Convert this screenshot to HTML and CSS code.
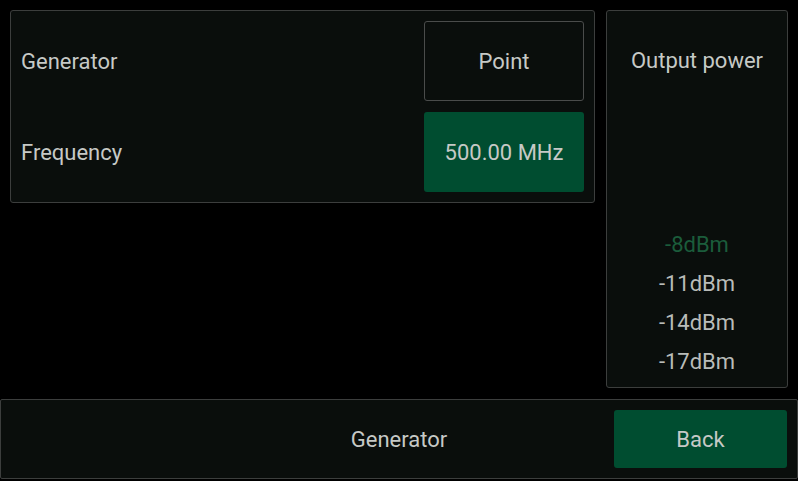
FILE: index.html
```html
<!DOCTYPE html>
<html lang="en">
<head>
  <meta charset="UTF-8" />
  <title>Generator</title>
  <link rel="stylesheet" href="styles.css">
</head>
<body>
  <div class="top">
    <div class="panel settings">
      <div class="row">
        <span class="label">Generator</span>
        <button class="btn outline">Point</button>
      </div>
      <div class="row">
        <span class="label">Frequency</span>
        <button class="btn green">500.00 MHz</button>
      </div>
    </div>
    <div class="panel power">
      <div class="power-title">Output power</div>
      <ul class="levels">
        <li class="active">-8dBm</li>
        <li>-11dBm</li>
        <li>-14dBm</li>
        <li>-17dBm</li>
      </ul>
    </div>
  </div>
  <div class="bottom">
    <div class="page-title">Generator</div>
    <button class="btn green back">Back</button>
  </div>
</body>
</html>
```

FILE: styles.css
```css
html, body {
  margin: 0;
  background: #000;
  height: 100%;
}
body {
  font-family: Roboto, "Liberation Sans", sans-serif;
  font-size: 22px;
  color: #c6c9c6;
  overflow: hidden;
}
.top {
  display: flex;
  gap: 11px;
  padding: 10px 10px 11px 10px;
  align-items: flex-start;
}
.panel {
  background: #0a0e0c;
  border: 1px solid #3c3e3d;
  border-radius: 3px;
  box-sizing: border-box;
}
.settings {
  width: 585px;
  padding: 10px;
  display: flex;
  flex-direction: column;
  gap: 11px;
}
.row {
  display: flex;
  align-items: center;
  justify-content: space-between;
  height: 80px;
}
.btn {
  font-family: inherit;
  font-size: 22px;
  color: #c6c9c6;
  width: 160px;
  height: 80px;
  border-radius: 3px;
  box-sizing: border-box;
  padding: 0;
}
.btn.outline {
  background: #0a0e0c;
  border: 1px solid #4a4c4b;
}
.btn.green {
  background: #004d30;
  border: none;
}
.power {
  width: 182px;
  height: 378px;
  display: flex;
  flex-direction: column;
  justify-content: space-between;
  align-items: center;
  padding: 10px 0 6px;
}
.power-title {
  height: 80px;
  line-height: 80px;
}
.levels {
  list-style: none;
  margin: 0;
  padding: 0;
  text-align: center;
}
.levels li {
  height: 39px;
  line-height: 39px;
  color: #b9bcb9;
}
.levels li.active {
  color: #1b5c3b;
}
.bottom {
  height: 80px;
  box-sizing: border-box;
  border: 1px solid #3c3e3d;
  border-radius: 2px;
  background: #0a0e0c;
  width: 798px;
  display: flex;
  align-items: center;
  position: relative;
  justify-content: flex-end;
  padding-right: 10px;
}
.page-title {
  position: absolute;
  left: 0;
  right: 0;
  text-align: center;
  pointer-events: none;
}
.back {
  width: 173px;
  height: 58px;
  position: relative;
}
```
